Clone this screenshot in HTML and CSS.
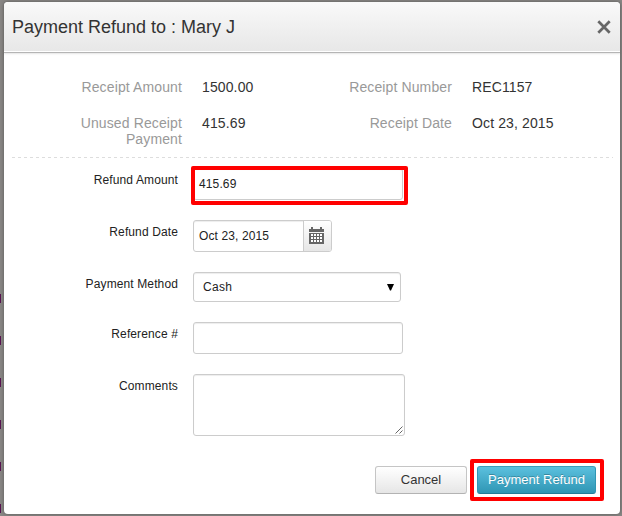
FILE: index.html
```html
<!DOCTYPE html>
<html lang="en">
<head>
<meta charset="utf-8">
<title>Payment Refund</title>
<link rel="stylesheet" href="styles.css">
</head>
<body>
<div class="dialog">
  <header class="header">
    <h1 class="title">Payment Refund to : Mary J</h1>
    <svg class="close" width="14" height="14" viewBox="0 0 14 14"><path d="M1.3 1.3L12.7 12.7M12.7 1.3L1.3 12.7" fill="none" stroke="#666" stroke-width="2.7"/></svg>
  </header>
  <div class="summary">
    <span class="key">Receipt Amount</span><span class="value">1500.00</span>
    <span class="key">Receipt Number</span><span class="value">REC1157</span>
    <span class="key">Unused Receipt Payment</span><span class="value">415.69</span>
    <span class="key">Receipt Date</span><span class="value">Oct 23, 2015</span>
  </div>
  <svg class="divider" width="601" height="1"><path d="M0 .5H601" stroke="#ddd" stroke-dasharray="3"/></svg>
  <div class="form">
    <div class="row"><span class="label">Refund Amount</span><div class="control text marked">415.69</div></div>
    <div class="row"><span class="label">Refund Date</span><div class="control date"><span class="day">Oct 23, 2015</span><span class="picker"><svg width="15" height="17" viewBox="0 0 15 17" shape-rendering="crispEdges"><path fill="#666" d="M2 0h2v2h7V0h2v2h2v3H0V2h2z"/><path fill="#666" d="M0 6h15v11H0z"/><path fill="#fff" d="M2 7h2v2H2zm3 0h2v2H5zm3 0h2v2H8zm3 0h2v2h-2zM2 10h2v2H2zm3 0h2v2H5zm3 0h2v2H8zm3 0h2v2h-2zM2 13h2v2H2zm3 0h2v2H5zm3 0h2v2H8zm3 0h2v2h-2z"/></svg></span></div></div>
    <div class="row"><span class="label">Payment Method</span><div class="control select">Cash<svg width="7" height="7" viewBox="0 0 7 7"><path d="M0 0H7L4 6.5H3z"/></svg></div></div>
    <div class="row"><span class="label">Reference #</span><div class="control text"></div></div>
    <div class="row"><span class="label">Comments</span><div class="control area"><svg width="8" height="8" viewBox="0 0 8 8"><path d="M.5 7.5l7-7M4.5 7.5l3-3" stroke="#555" stroke-width=".9"/></svg></div></div>
  </div>
  <footer class="footer">
    <div class="button cancel">Cancel</div>
    <div class="button primary marked">Payment Refund</div>
  </footer>
</div>
<div class="edge"><i></i><i></i><i></i><i></i><i></i><i></i></div>
</body>
</html>
```
FILE: styles.css
```css
* { box-sizing: border-box; }
body {
  margin: 0;
  height: 516px;
  padding: 2px 2px 2px 4px;
  overflow: hidden;
  background: #898785;
  font-family: "Liberation Sans", Arial, sans-serif;
  color: #333;
}
.dialog {
  width: 616px;
  height: 512px;
  background: #fff;
  border-radius: 4px;
  box-shadow: 0 0 4px rgba(0, 0, 0, .35);
}
.header {
  display: flex;
  align-items: center;
  justify-content: space-between;
  height: 51px;
  padding: 0 9px 0 8px;
  border-bottom: 1px solid #b5b5b5;
  border-radius: 4px 4px 0 0;
  background: linear-gradient(#f9f9f9, #e7e7e7);
  box-shadow: inset 0 -1px #fff, 0 1px 2px rgba(0, 0, 0, .1);
}
.title { margin: 0; font-size: 18px; font-weight: 400; line-height: 22px; }
.close { display: block; }
.summary {
  display: grid;
  grid-template-columns: 130px 130px 100px 1fr;
  grid-template-rows: 36px 42px;
  column-gap: 20px;
  padding: 26px 0 0 48px;
  height: 104px;
  font-size: 14px;
  line-height: 16px;
  letter-spacing: .12px;
}
.key { text-align: right; color: #999; }
.summary .key:nth-of-type(4n + 3) { margin-left: -20px; }
.summary .key:nth-of-type(4n + 1) { padding-left: 20px; }
.value { color: #333; }
.divider { display: block; margin-left: 8px; }
.form {
  display: grid;
  row-gap: 20px;
  padding-top: 10px;
  font-size: 12px;
  letter-spacing: .12px;
  color: #222;
}
.row { display: flex; align-items: flex-start; }
.label { width: 174px; margin-right: 15px; padding-top: 4px; line-height: 16px; text-align: right; }
.control {
  position: relative;
  height: 32px;
  border: 1px solid #ccc;
  border-radius: 3px;
  background: #fff;
  box-shadow: inset 0 1px 1px rgba(0, 0, 0, .075);
}
.text { width: 210px; padding-left: 5px; line-height: 30px; }
.date { display: flex; width: 139px; }
.day { flex: 1; padding-left: 5px; line-height: 30px; }
.picker {
  display: flex;
  align-items: flex-start;
  width: 28px;
  padding: 6px 0 0 5px;
  border-left: 1px solid #ccc;
  border-radius: 0 2px 2px 0;
  background: linear-gradient(#fff, #e6e6e6);
}
.select {
  display: flex;
  align-items: center;
  justify-content: space-between;
  width: 208px;
  height: 30px;
  padding: 0 6px 0 9px;
  letter-spacing: .3px;
}
.area { display: flex; align-items: flex-end; justify-content: flex-end; width: 212px; height: 62px; padding: 1px; }
.footer { display: flex; gap: 10px; justify-content: flex-end; padding: 30px 24px 0 0; }
.button {
  height: 28px;
  border: 1px solid #c5c5c5;
  border-radius: 3px;
  font-size: 13px;
  line-height: 26px;
  text-align: center;
}
.cancel { width: 92px; border-bottom-color: #b3b3b3; background: linear-gradient(#fff, #e6e6e6); }
.primary {
  position: relative;
  width: 119px;
  border-color: #3a9dbb #2f96b4 #237c98;
  background: linear-gradient(#5bc0de, #2f96b4);
  color: #fff;
  text-shadow: 0 -1px rgba(0, 0, 0, .25);
}
.marked::after { content: ""; position: absolute; border: 4px solid #f00; border-radius: 2px; }
.text.marked::after { inset: -3px -6px -6px -3px; }
.primary.marked::after { inset: -8px -9px -8px -8px; }
.edge { position: absolute; left: 0; top: 294px; display: grid; gap: 33px; }
.edge i { width: 1px; height: 9px; background: #571350; }
```
